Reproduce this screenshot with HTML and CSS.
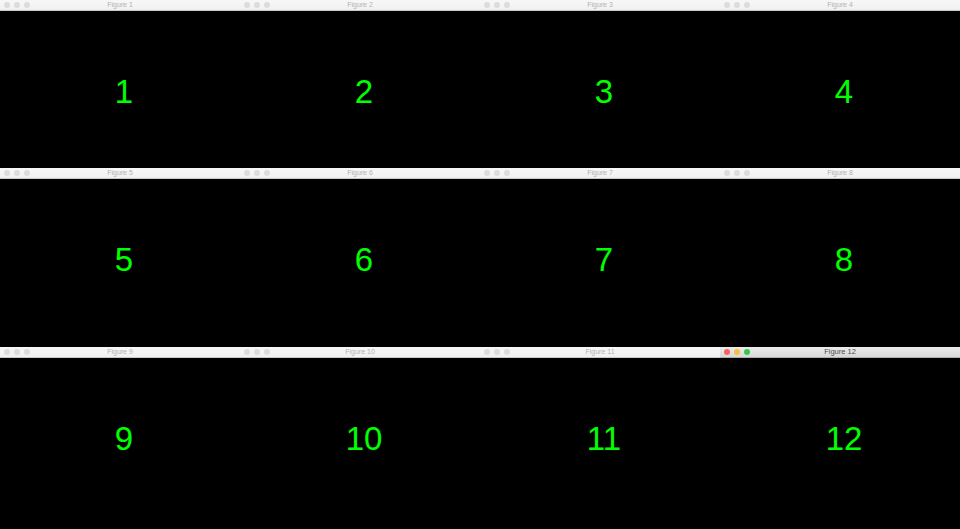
FILE: index.html
```html
<!DOCTYPE html>
<html>
<head>
<meta charset="utf-8">
<link rel="stylesheet" href="styles.css">
</head>
<body>
<div class="desk">
  <div class="win"><div class="bar"><span class="dots"><i></i><i></i><i></i></span><span class="title">Figure 1</span></div><div class="view">1</div></div>
  <div class="win"><div class="bar"><span class="dots"><i></i><i></i><i></i></span><span class="title">Figure 2</span></div><div class="view">2</div></div>
  <div class="win"><div class="bar"><span class="dots"><i></i><i></i><i></i></span><span class="title">Figure 3</span></div><div class="view">3</div></div>
  <div class="win"><div class="bar"><span class="dots"><i></i><i></i><i></i></span><span class="title">Figure 4</span></div><div class="view">4</div></div>
  <div class="win"><div class="bar"><span class="dots"><i></i><i></i><i></i></span><span class="title">Figure 5</span></div><div class="view">5</div></div>
  <div class="win"><div class="bar"><span class="dots"><i></i><i></i><i></i></span><span class="title">Figure 6</span></div><div class="view">6</div></div>
  <div class="win"><div class="bar"><span class="dots"><i></i><i></i><i></i></span><span class="title">Figure 7</span></div><div class="view">7</div></div>
  <div class="win"><div class="bar"><span class="dots"><i></i><i></i><i></i></span><span class="title">Figure 8</span></div><div class="view">8</div></div>
  <div class="win"><div class="bar"><span class="dots"><i></i><i></i><i></i></span><span class="title">Figure 9</span></div><div class="view">9</div></div>
  <div class="win"><div class="bar"><span class="dots"><i></i><i></i><i></i></span><span class="title">Figure 10</span></div><div class="view">10</div></div>
  <div class="win"><div class="bar"><span class="dots"><i></i><i></i><i></i></span><span class="title">Figure 11</span></div><div class="view">11</div></div>
  <div class="win active"><div class="bar"><span class="dots"><i class="close"></i><i class="min"></i><i class="max"></i></span><span class="title">Figure 12</span></div><div class="view">12</div></div>
</div>
</body>
</html>
```
FILE: styles.css
```css
html, body {
  margin: 0;
  padding: 0;
  background: #000;
  width: 960px;
  height: 529px;
  overflow: hidden;
}
.desk {
  display: grid;
  grid-template-columns: repeat(4, 240px);
  grid-template-rows: 168px 179px 182px;
  width: 960px;
  height: 529px;
}
.win {
  display: flex;
  flex-direction: column;
  overflow: hidden;
  background: #000;
}
.bar {
  height: 11px;
  flex: none;
  background: linear-gradient(#f7f7f7, #f1f1f1);
  border-bottom: 1px solid #c8c8c8;
  box-sizing: border-box;
  display: flex;
  align-items: center;
  padding: 0 4px;
  position: relative;
}
.dots {
  display: flex;
  gap: 4px;
}
.dots i {
  display: block;
  width: 6px;
  height: 6px;
  border-radius: 50%;
  background: #dcdcdc;
}
.title {
  flex: 1;
  text-align: center;
  margin-right: 26px;
  font-family: "Liberation Sans", Arial, sans-serif;
  font-size: 7px;
  line-height: 10px;
  color: #b3b3b3;
}
.active .bar {
  background: linear-gradient(#ececec, #d8d8d8);
  border-bottom-color: #b0b0b0;
}
.active .title {
  color: #4d4d4d;
  font-size: 7.5px;
}
.active .close { background: #fc605c; }
.active .min { background: #fdbc40; }
.active .max { background: #34c84a; }
.view {
  flex: 1;
  background: #000;
  color: #00ff00;
  font-family: "Liberation Sans", Arial, sans-serif;
  font-size: 33px;
  line-height: 33px;
  text-align: center;
  padding: 64px 0 0 8px;
}
```
